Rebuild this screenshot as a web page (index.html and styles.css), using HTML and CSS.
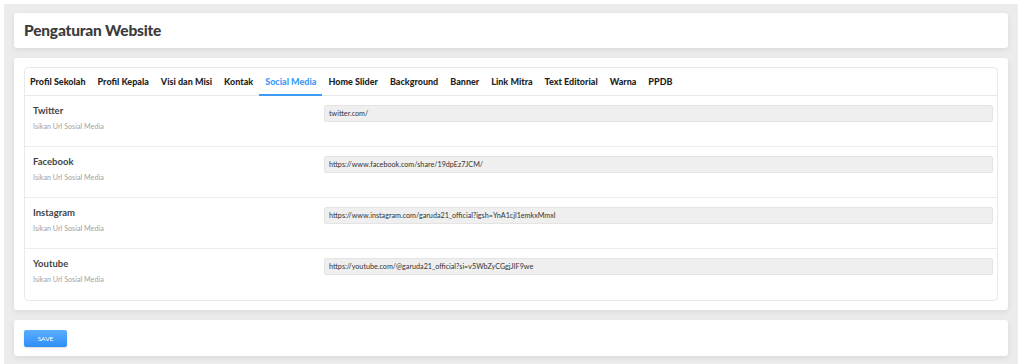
FILE: index.html
```html
<!DOCTYPE html>
<html lang="id">
<head>
    <meta charset="UTF-8">
    <meta name="viewport" content="width=device-width, initial-scale=1.0">
    <title>Pengaturan Website</title>
    <link rel="stylesheet" href="styles.css">
</head>
<body>
    <div class="page">
        <div class="card header">
            <h1>Pengaturan Website</h1>
        </div>

        <div class="card body">
            <div class="panel">
                <ul class="tabs">
                    <li><a href="#">Profil Sekolah</a></li>
                    <li><a href="#">Profil Kepala</a></li>
                    <li><a href="#">Visi dan Misi</a></li>
                    <li><a href="#">Kontak</a></li>
                    <li class="active"><a href="#">Social Media</a></li>
                    <li><a href="#">Home Slider</a></li>
                    <li><a href="#">Background</a></li>
                    <li><a href="#">Banner</a></li>
                    <li><a href="#">Link Mitra</a></li>
                    <li><a href="#">Text Editorial</a></li>
                    <li><a href="#">Warna</a></li>
                    <li><a href="#">PPDB</a></li>
                </ul>

                <!-- social media rows -->
                <div class="row">
                    <div class="label">
                        <h4>Twitter</h4>
                        <p>Isikan Url Sosial Media</p>
                    </div>
                    <input type="text" class="input" value="twitter.com/">
                </div>
                <div class="row">
                    <div class="label">
                        <h4>Facebook</h4>
                        <p>Isikan Url Sosial Media</p>
                    </div>
                    <input type="text" class="input" value="https://www.facebook.com/share/19dpEz7JCM/">
                </div>
                <div class="row">
                    <div class="label">
                        <h4>Instagram</h4>
                        <p>Isikan Url Sosial Media</p>
                    </div>
                    <input type="text" class="input" value="https://www.instagram.com/garuda21_official?igsh=YnA1cjl1emkxMmxl">
                </div>
                <div class="row">
                    <div class="label">
                        <h4>Youtube</h4>
                        <p>Isikan Url Sosial Media</p>
                    </div>
                    <input type="text" class="input" value="https://youtube.com/@garuda21_official?si=v5WbZyCGgjJIF9we">
                </div>
            </div>
        </div>

        <div class="card footer">
            <a href="#" class="button">SAVE</a>
        </div>
    </div>
</body>
</html>
```

FILE: styles.css
```css
* {
    margin: 0;
    padding: 0;
    box-sizing: border-box;
}

a {
    color: #222;
    text-decoration: none;
}

body {
    background: #fff;
    color: #444;
    font: 10px/1.4 Lato, sans-serif;
    padding: 4px 6px 0 4px;
    overflow: hidden;
}

.page {
    background: #ececec;
    padding: 9px 10px 10px;
    display: flex;
    flex-direction: column;
    gap: 10px;
}

.card {
    background: #fff;
    border-radius: 3px;
    box-shadow: 0 2px 6px rgba(0, 0, 0, 0.08);
}

.header {
    height: 35px;
    padding: 0 10px;
    display: flex;
    align-items: center;
}

.header h1 {
    font-size: 15.5px;
    font-weight: 900;
    color: #3c3c3c;
    letter-spacing: -0.2px;
}

.body {
    padding: 9px 10px 9px;
}

.panel {
    border: 1px solid #e9e9e9;
    border-radius: 4px;
}

.tabs {
    list-style: none;
    display: flex;
    border-bottom: 1px solid #e9e9e9;
}

.tabs li a {
    display: block;
    padding: 6px 6px 5px;
    font-size: 9px;
    font-weight: 900;
    line-height: 15px;
    border-bottom: 2px solid transparent;
    margin-bottom: -1px;
    color: #1f1f1f;
}

.tabs li:first-child a {
    padding-left: 5px;
}

.tabs li.active a {
    color: #3d9bf7;
    border-bottom-color: #3d9bf7;
}

.row {
    display: grid;
    grid-template-columns: 299px 1fr;
    padding: 8px 4px 0 0;
    height: 51px;
    border-bottom: 1px solid #ececec;
}

.row:last-child {
    border-bottom: 0;
}

.label {
    padding-left: 8px;
}

.label h4 {
    font-size: 9.5px;
    font-weight: 700;
    color: #444;
    line-height: 13px;
}

.label p {
    margin-top: 4px;
    font-size: 7.2px;
    color: #a3a3a3;
    line-height: 11px;
}

.row .input {
    margin-top: 1px;
}

.input {
    height: 17px;
    padding: 0 4px;
    background: #efefef;
    border: 1px solid #e4e4e4;
    border-radius: 2px;
    font: 7.2px Lato, sans-serif;
    color: #333;
    outline: 0;
    width: 100%;
}

.footer {
    height: 36px;
    padding: 0 10px;
    display: flex;
    align-items: center;
}

.button {
    display: inline-block;
    width: 43px;
    height: 17px;
    line-height: 17px;
    text-align: center;
    font-size: 6.5px;
    color: #fff;
    border-radius: 2px;
    background: linear-gradient(180deg, #5aaeff 0%, #2f8ef5 100%);
    box-shadow: 0 1px 2px rgba(0, 0, 0, 0.15);
}
```
